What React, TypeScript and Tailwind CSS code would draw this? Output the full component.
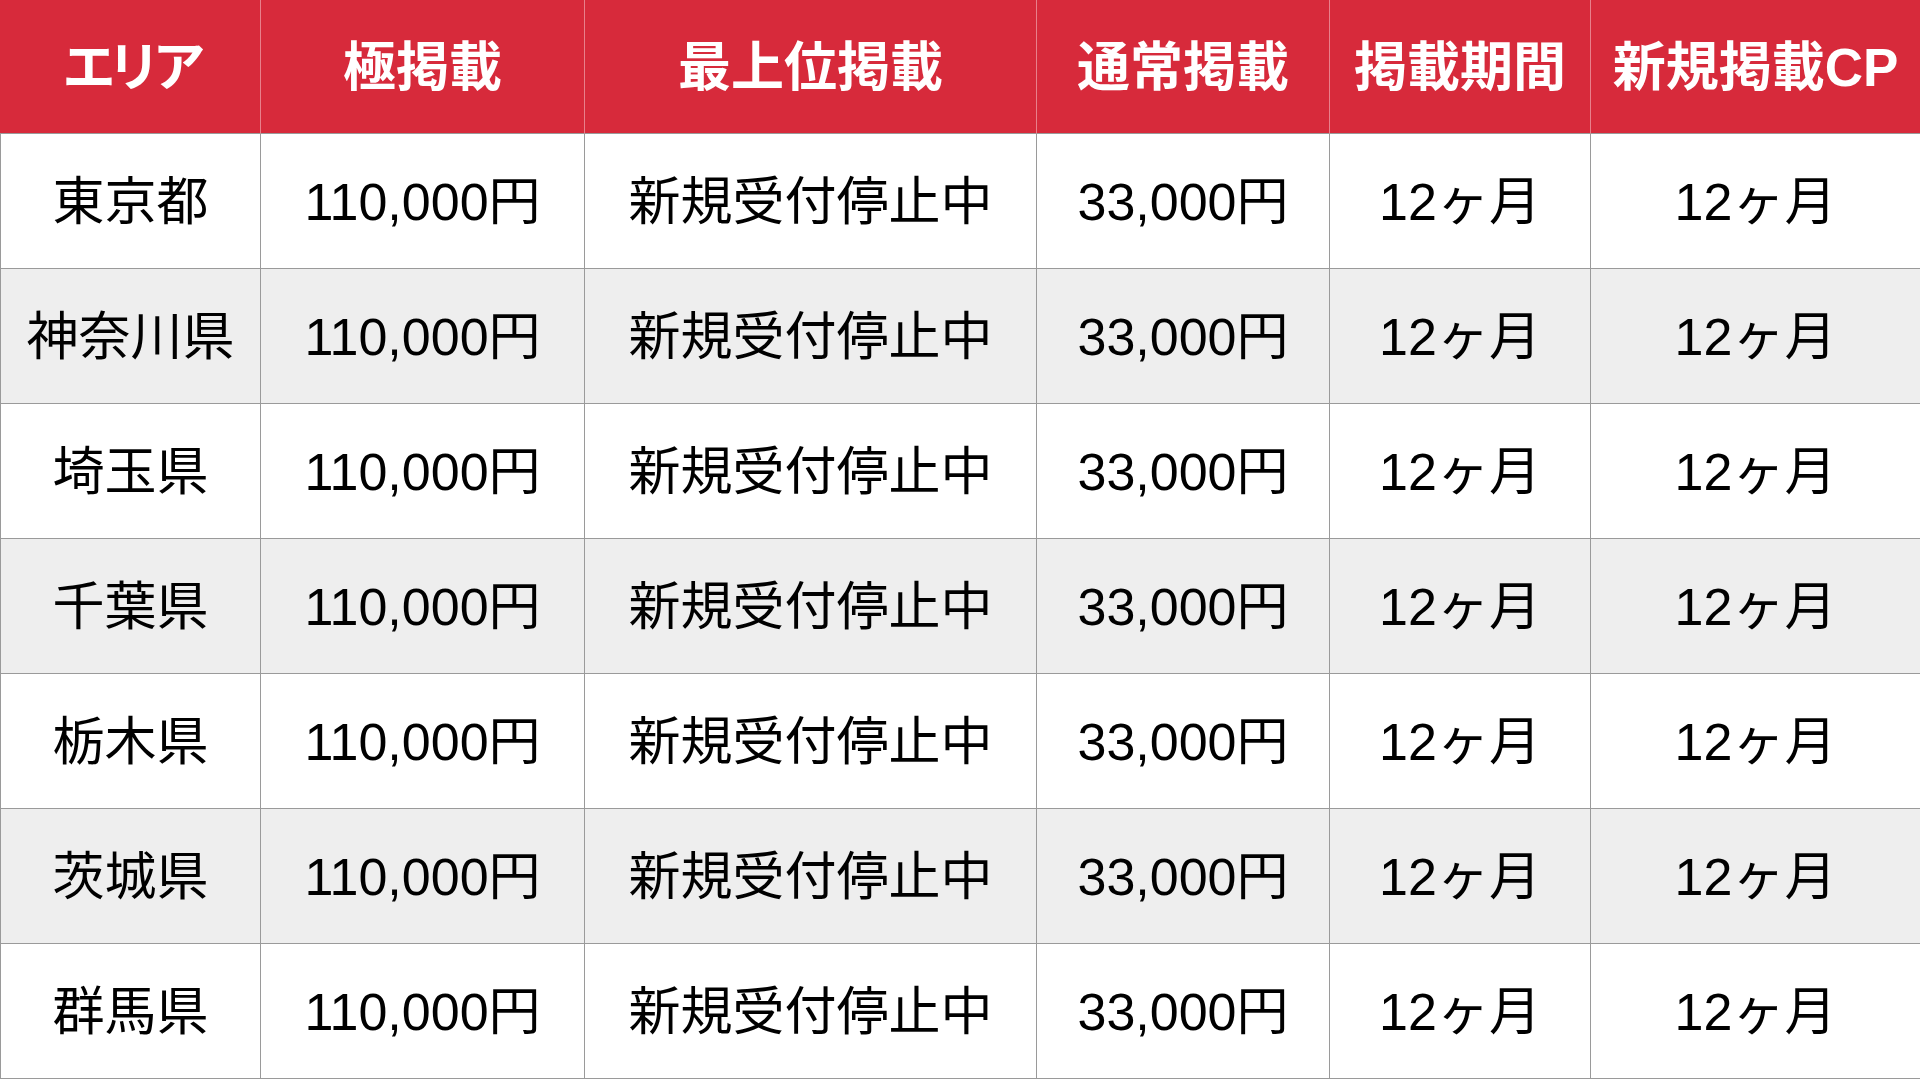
const headers = ["エリア", "極掲載", "最上位掲載", "通常掲載", "掲載期間", "新規掲載CP"];

const areas = ["東京都", "神奈川県", "埼玉県", "千葉県", "栃木県", "茨城県", "群馬県"];

export default function App() {
  return (
    <div
      className="w-[1920px] h-[1080px] overflow-hidden bg-white text-black"
      style={{ fontFamily: '"Liberation Sans", "Noto Sans CJK JP", sans-serif' }}
    >
      <div className="grid grid-cols-[261px_324px_452px_293px_261px_329px] grid-rows-[134px_repeat(7,135px)]">
        {headers.map((h, i) => (
          <div
            key={h}
            className={
              "flex items-center justify-center bg-[#d72a3b] text-white font-bold text-[53px] pt-[2px] border-b border-[#9a9a9a] " +
              (i < headers.length - 1 ? "border-r border-r-[#e8808b]" : "") +
              (i === 0 ? " tracking-[-8px]" : "")
            }
          >
            {h}
          </div>
        ))}
        {areas.map((area, r) => {
          const bg = r % 2 === 0 ? "bg-white" : "bg-[#eeeeee]";
          const cells = [area, "110,000円", "新規受付停止中", "33,000円", "12ヶ月", "12ヶ月"];
          return cells.map((c, i) => (
            <div
              key={area + i}
              className={
                "flex items-center justify-center text-[52px] pt-[2px] border-b border-[#9a9a9a] " +
                bg +
                (i < cells.length - 1 ? " border-r" : "") +
                (i === 0 ? " border-l" : "")
              }
            >
              {c}
            </div>
          ));
        })}
      </div>
    </div>
  );
}
